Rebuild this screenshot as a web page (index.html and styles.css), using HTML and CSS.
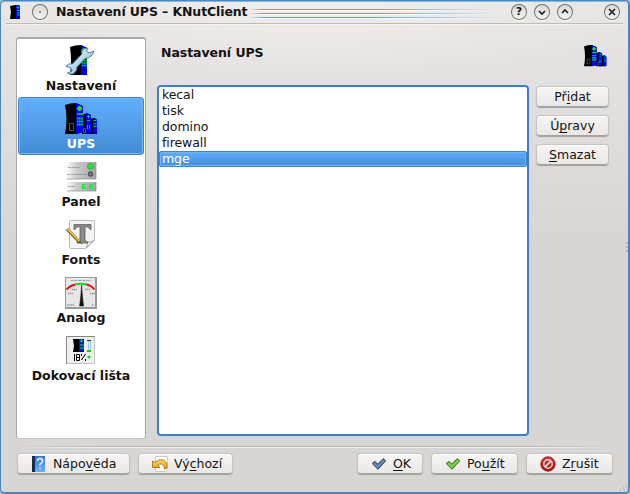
FILE: index.html
```html
<!DOCTYPE html>
<html lang="cs">
<head>
<meta charset="utf-8">
<title>Nastavení UPS – KNutClient</title>
<link rel="stylesheet" href="styles.css">
</head>
<body>
<svg class="defs" width="0" height="0">
  <defs>
    <linearGradient id="steel" x1="0" y1="0" x2="1" y2="1"><stop offset="0" stop-color="#f4fcff"/><stop offset=".5" stop-color="#b5d9ee"/><stop offset="1" stop-color="#5c8fb5"/></linearGradient>
    <linearGradient id="metal"><stop offset="0" stop-color="#fff"/><stop offset=".35" stop-color="#ccc"/><stop offset="1" stop-color="#a2a2a2"/></linearGradient>
    <linearGradient id="book" x2="0" y2="1"><stop offset="0" stop-color="#3a75cd"/><stop offset="1" stop-color="#69b1fb"/></linearGradient>
    <linearGradient id="gold" x2="0" y2="1"><stop offset="0" stop-color="#ffe25e"/><stop offset="1" stop-color="#e59a0c"/></linearGradient>
    <linearGradient id="red" x2="0" y2="1"><stop offset="0" stop-color="#e03a35"/><stop offset="1" stop-color="#a50b0b"/></linearGradient>
    <symbol id="tower" viewBox="0 0 20 31">
      <path d="M1 2Q6 0 12 0L18 3V30H1Q3 16 1 2Z" fill="#000"/>
      <path d="M12 0L18 3V30H12Z" fill="#00f"/>
      <path d="M15 3v5M12.500 5.500h5" stroke="#00e020" stroke-width="2.500"/>
      <path d="M13 11h5M13 15.500h5M13 18h5M13 20.500h5" stroke="#00e020" stroke-width="1.500" stroke-dasharray="1.300 .5"/>
    </symbol>
    <symbol id="towers" viewBox="0 0 33 32">
      <path d="M23 16L30 15L32 17V31H22Z" fill="#000"/><path d="M28 15l4 2v13l-4 1z" fill="#00f"/>
      <path d="M28.500 17.500h3M28.500 21h3M28.500 23.500h3" stroke="#00d020"/>
      <path d="M17 12L22 10L26 12V31H17Z" fill="#000"/><path d="M21 10l5 2v18l-5 1z" fill="#00f"/>
      <path d="M23.500 12v3M22 13.500h3M22 17.500h3M22.500 22v4M24.500 22v4" stroke="#00d020"/>
      <path d="M18.500 25.500h2v4h-2z" fill="none" stroke="#555"/>
      <path d="M0 2Q5 0 11 0L18 3V29L12 31H0Q3 16 0 2Z" fill="#000"/><path d="M11 .5l7 2.500v26l-7 2z" fill="#00f"/>
      <path d="M14.500 3v5M12 5.500h5" stroke="#0e2" stroke-width="2.500"/>
      <path d="M12 11h6" stroke="#0e2" stroke-width="1.500"/><path d="M12 15.500h6M12 18.500h6M12 21.500h6" stroke="#0e2" stroke-width="2" stroke-dasharray="1.500 .6"/>
      <path d="M4.500 20.500h4v7h-4z" fill="none" stroke="#555"/>
    </symbol>
    <symbol id="check" viewBox="0 0 16 16"><path d="M1.200 7.500L4 5.300L6.700 8.200L12.200 2.600L14.700 4.800L7 13.300Z" stroke-width="1" stroke-linejoin="round"/><path d="M3 7.500l3.700 3.200 6.500-6.200" fill="none" stroke="#fff" stroke-opacity=".35"/></symbol>
  </defs>
</svg>

<div class="window">
  <header class="titlebar">
    <svg class="app-icon" width="11" height="15" viewBox="0 0 11 15"><path d="M0 1L5 0H9L10 2V14H0L1 7Z" fill="#000"/><path d="M6 0h3l1 2v11l-4 1z" fill="#00f"/><path d="M8 1v3M6.500 2.500h3M7 5.500h3M7 8h3M7 10h3" stroke="#0c3"/></svg>
    <span class="round"><svg width="16" height="16"><circle cx="8" cy="8" r=".8" fill="#222"/></svg></span>
    <h1>Nastavení UPS – KNutClient</h1>
    <div class="grip"></div>
    <div class="controls">
      <span class="round"><b>?</b></span>
      <span class="round"><svg width="16" height="16"><path d="M5 7l3 3 3-3"/></svg></span>
      <span class="round"><svg width="16" height="16"><path d="M5 9l3-3 3 3"/></svg></span>
      <span class="round close"><svg width="16" height="16"><path d="M5 5l6 6M11 5l-6 6"/></svg></span>
    </div>
  </header>

  <main class="content">
    <nav class="sidebar">
      <div class="page">
        <svg width="32" height="32" viewBox="0 0 32 32"><use href="#tower" x="4" y="0" width="20" height="31"/><path d="M1 21.500Q3 18 7.500 19L17 9Q16 5 20 3.500L23 3L21.500 6L24 8L29 6Q27 13 20 13.500L12 22Q12 27 7.500 29Q4 29.500 2.500 28L7 26L5.500 22.500Z" fill="url(#steel)" stroke="#527da8" stroke-width="1"/></svg>
        <span>Nastavení</span>
      </div>
      <div class="page selected">
        <svg width="33" height="32"><use href="#towers" width="33" height="32"/></svg>
        <span>UPS</span>
      </div>
      <div class="page">
        <svg width="32" height="32" viewBox="0 0 32 32"><path d="M1 1h30v17H1z" fill="url(#metal)"/><path d="M1 21h30v9H1z" fill="url(#metal)"/><path d="M2 18h29V1M2 30h29V21" fill="none" stroke="#8b8b8b" stroke-opacity=".7"/><path d="M3 6.500h12M2 13.500h19M3 25.500h7" stroke="#777" stroke-opacity=".7" stroke-dasharray="2 .7 1 .6"/><circle cx="25.500" cy="5.500" r="3" fill="#10ee28" stroke="#579a5a"/><circle cx="25.500" cy="13" r="2.700" fill="#555"/><circle cx="25.500" cy="13" r="1" fill="#999"/><path d="M20.500 23.500h-3v4h2.500v-2h-2M27.500 23.500h-3v4h3v-2h-3M22.500 24v1m0 2v1" fill="none" stroke="#16e42c"/></svg>
        <span>Panel</span>
      </div>
      <div class="page">
        <svg width="32" height="32" viewBox="0 0 32 32"><path d="M5.500 1.500h23q1 0 1 1V21L21 29.500H5.500q-1 0-1-1v-26q0-1 1-1z" fill="#f4f4f4" stroke="#bbb"/><path d="M21 29q2-3 1-6q4 1 7-2z" fill="#fff" stroke="#aaa"/><path d="M9 5.500h17v5h-1q-1-3-5-3v13q0 2 3 2.500v1H12v-1q3-.5 3-2.500v-13q-4 0-5 3H9z" fill="#8a8a8a" stroke="#606060" stroke-width=".8"/><path d="M2 10l13 13.500" stroke="#735322" stroke-width="3.200"/><path d="M2.500 10l12 12.500" stroke="#f0cd42" stroke-width="1.700"/><path d="M14 22l3 3" stroke="#5b4a35"/></svg>
        <span>Fonts</span>
      </div>
      <div class="page">
        <svg width="32" height="32" viewBox="0 0 32 32"><path d="M0 0h32v32H0z" fill="#999"/><path d="M1 1h29v29H1z" fill="#e6e6e6"/><path d="M6 3.500h20" stroke="#999" stroke-dasharray="2 .6 1 .4"/><path d="M1.500 12.500Q5 8.500 10.500 7.500" stroke="#e21616" stroke-width="2" fill="none"/><path d="M10.500 7.300q5.500-1.300 11 0" stroke="#18d52c" stroke-width="2" fill="none"/><path d="M21.500 7.500q5 1 8 5" stroke="#e21616" stroke-width="2" fill="none"/><path d="M7 12.500h5M20 12.500h5M3 16.500h5M25 16.500h5M2 28h7M27 28h2" stroke="#999" stroke-width="1.600" stroke-dasharray="1.500 .5"/><path d="M16.600 8l1 13 1 8h-4l1-8z" fill="#111" stroke="#111" stroke-width=".5"/></svg>
        <span>Analog</span>
      </div>
      <div class="page">
        <svg width="32" height="32" viewBox="0 0 32 32"><path d="M1 1h29v28H1z" fill="#eee"/><path d="M1.500 29V1.500H30" fill="none" stroke="#888"/><path d="M29.500 2v26.500H2" fill="none" stroke="#c4c4c4"/><path d="M8 4h11v13H8l1-6z" fill="#000"/><path d="M14 4h5v12l-5 1z" fill="#0014e8"/><path d="M16.500 4.500v3M15 6h3M15 10h4M15 13h4" stroke="#0ce020"/><path d="M23.500 5v11h2V5" fill="#dff5ff" stroke="#9acfea"/><path d="M22 5.500h4" stroke="#222"/><path d="M22 16h4" stroke="#16c32b" stroke-width="2"/><path d="M9.500 19v7M11.500 19.500h3v6h-3zM11.500 22.500h3M16.500 19v2m4-2l-4 6m4-1v2" fill="none" stroke="#000"/><circle cx="24" cy="22" r="1.600" fill="#12e02a"/></svg>
        <span>Dokovací lišta</span>
      </div>
    </nav>

    <section class="pane">
      <div class="heading">
        <h2>Nastavení UPS</h2>
        <svg width="23" height="22" viewBox="0 0 33 32" preserveAspectRatio="none"><use href="#towers" width="33" height="32"/></svg>
      </div>
      <div class="body">
        <ul class="list">
          <li>kecal</li>
          <li>tisk</li>
          <li>domino</li>
          <li>firewall</li>
          <li class="selected">mge</li>
        </ul>
        <div class="actions">
          <button>Př<u>i</u>dat</button>
          <button>Ú<u>p</u>ravy</button>
          <button><u>S</u>mazat</button>
        </div>
      </div>
    </section>
  </main>

  <div class="rule"></div>
  <footer class="footer">
    <button class="help"><svg width="16" height="16" viewBox="0 0 16 16"><path d="M1 0h13v16H1z" fill="url(#book)"/><path d="M1 0h3v16H1z" fill="#122d50"/><path d="M6.500 5q0-2.500 2.500-2.500T11.500 5q0 1.500-1.500 2.300T9 9.500M9 11.500v1.500" fill="none" stroke="#e9f5ff" stroke-width="1.500"/></svg><span>Nápo<u>v</u>ěda</span></button>
    <button class="defaults"><svg width="16" height="16" viewBox="0 0 16 16"><path d="M3.500.5h12v13l-2 2h-10z" fill="#fafafa" stroke="#ccc"/><path d="M.5 5L3 6.500Q7 2.500 11.500 4Q15.500 6 15 12L12.500 13Q12.500 8.500 9.500 8Q7.500 7.700 6 9L8 11.500H.5Z" fill="url(#gold)" stroke="#9c6a10" stroke-width=".8"/></svg><span>Vý<u>c</u>hozí</span></button>
    <button class="ok"><svg width="16" height="16" fill="#4f779f" stroke="#2c4866"><use href="#check"/></svg><span><u>O</u>K</span></button>
    <button class="apply"><svg width="16" height="16" fill="#69c13b" stroke="#2f7a18"><use href="#check"/></svg><span>Po<u>u</u>žít</span></button>
    <button class="cancel"><svg width="16" height="16" viewBox="0 0 16 16"><circle cx="8" cy="8" r="7.200" fill="url(#red)" stroke="#8c0c0c" stroke-width=".8"/><circle cx="8" cy="8" r="4.200" fill="none" stroke="#e8dcdc" stroke-width="1.400"/><path d="M5.200 10.800l5.600-5.600" stroke="#e8dcdc" stroke-width="1.800"/></svg><span>Z<u>r</u>ušit</span></button>
  </footer>
  <svg class="resize" width="8" height="8"><path d="M5 1h1M3 4h1M6 4h1M0 6h1M4 7h1" stroke="#999" stroke-width="1"/></svg>
  <svg class="side-grip" width="4" height="12"><path d="M1 1h2M1 5h2M1 9h2" stroke="#999"/></svg>
</div>
</body>
</html>
```
FILE: styles.css
```css
* { box-sizing: border-box; }
body { margin: 0; background: #a5b9cc; font: 12.5px/16px "DejaVu Sans", sans-serif; color: #141312; overflow: hidden; }
.defs { display: block; position: absolute; }
h1, h2, ul { margin: 0; padding: 0; font-size: inherit; }
svg { flex: none; }
u { text-decoration: underline; text-underline-offset: 2px; text-decoration-thickness: 1px; text-decoration-skip-ink: none; }

.window {
  position: relative;
  display: flex;
  flex-direction: column;
  width: 630px;
  height: 494px;
  border: 1px solid #4a86c0;
  border-right-width: 2px;
  border-bottom-width: 2px;
  border-radius: 5px;
  background: radial-gradient(ellipse 330px 80px at 50% 0, #efeeed, #efeeed00), linear-gradient(#e7e6e5, #d7d6d4 240px);
  box-shadow: inset 0 1px #8db8de;
}
.titlebar { display: flex; align-items: center; height: 23px; margin: 0 5px; padding-left: 4px; border-bottom: 1px solid #bcbbb9; box-shadow: 0 1px #f5f4f3; }
.app-icon { margin-right: 11px; }
.titlebar h1 { margin-left: 8px; width: 193px; letter-spacing: -.11px; white-space: nowrap; }
.round { width: 16px; height: 16px; display: flex; align-items: center; justify-content: center; border-radius: 50%; background: linear-gradient(#dad9d8, #f5f4f3); box-shadow: inset 0 0 0 1px #757371, 0 1px #fff; flex: none; }
.round b { font-size: 11px; font-weight: bold; line-height: 16px; }
.round path { fill: none; stroke: #222; stroke-width: 1.7; }
.grip {
  align-self: flex-start;
  width: 256px;
  height: 10px;
  margin: 8px 0 0 1px;
  background: linear-gradient(#6a9fd6 1px, #fff 1px 2px, transparent 2px) 0 0 / 100% 4px repeat-y;
  mask-image: linear-gradient(90deg, transparent, #000 12px, #000 50%, transparent 96%);
}
.controls { display: flex; gap: 7px; margin-left: auto; margin-right: 3px; }
.close { margin-left: 24px; }

.content { display: flex; gap: 11px; height: 402px; margin: 13px 0 0 15px; }
.sidebar { width: 130px; height: 402px; padding: 1px; border: 1px solid #aaa9a7; border-bottom-color: #c5c4c2; border-radius: 3px; background: #fff; box-shadow: inset 0 1px #aaa9a7; }
.page { display: flex; flex-direction: column; align-items: center; height: 58px; padding-top: 5px; border: 1px solid transparent; border-radius: 3px; font-weight: bold; white-space: nowrap; }
.page span { margin-top: 1px; }
.page.selected { color: #fff; border-color: #3d84ca; background: linear-gradient(#62afff, #438cd4); box-shadow: inset 0 0 0 1px #73b5f3; }

.pane { width: 453px; }
.heading { display: flex; justify-content: space-between; height: 48px; padding: 8px 4px 0; }
.heading h2 { line-height: 16px; letter-spacing: -.05px; }
.heading svg { margin-right: -1px; }
.body { display: flex; gap: 7px; letter-spacing: -.08px; }
.list { width: 372px; height: 351px; padding: 0; border: 2px solid #3d7fc7; border-radius: 4px; background: #fff; list-style: none; }
.list li { height: 16px; padding-left: 3px; line-height: 16px; }
.list .selected { color: #fff; border-radius: 3px; background: linear-gradient(#62afff, #438cd4); box-shadow: inset 0 0 0 1px #3d84ca, inset 0 0 0 2px #73b5f3; }
.actions { display: flex; flex-direction: column; gap: 8px; width: 73px; padding-top: 1px; }
button { display: flex; align-items: center; justify-content: center; height: 21px; padding: 0; border: 1px solid #c6c4c2; border-bottom-color: #a4a3a1; border-radius: 4px; background: linear-gradient(#f6f5f4, #e9e8e6); box-shadow: 0 1px 1px #0004, inset 0 1px #fff; color: #141312; font: inherit; line-height: 18px; white-space: pre; }

.rule { height: 2px; margin: 7px 14px 0; background: linear-gradient(#b3b2b0 50%, #f4f3f2 50%); mask-image: linear-gradient(90deg, transparent, #000 15%, #000 85%, transparent); }
.footer { display: flex; gap: 8px; margin: 5px 15px 0 16px; }
.footer button { justify-content: flex-start; padding-left: 13px; }
.footer button span { margin-left: 6px; }
.help { width: 113px; }
.defaults { width: 95px; }
.ok { width: 66px; margin-left: auto; }
.apply { width: 87px; }
.cancel { width: 87px; }
.resize { position: absolute; right: 0; bottom: 0; }
.side-grip { position: absolute; right: -1px; top: 241px; }
```
